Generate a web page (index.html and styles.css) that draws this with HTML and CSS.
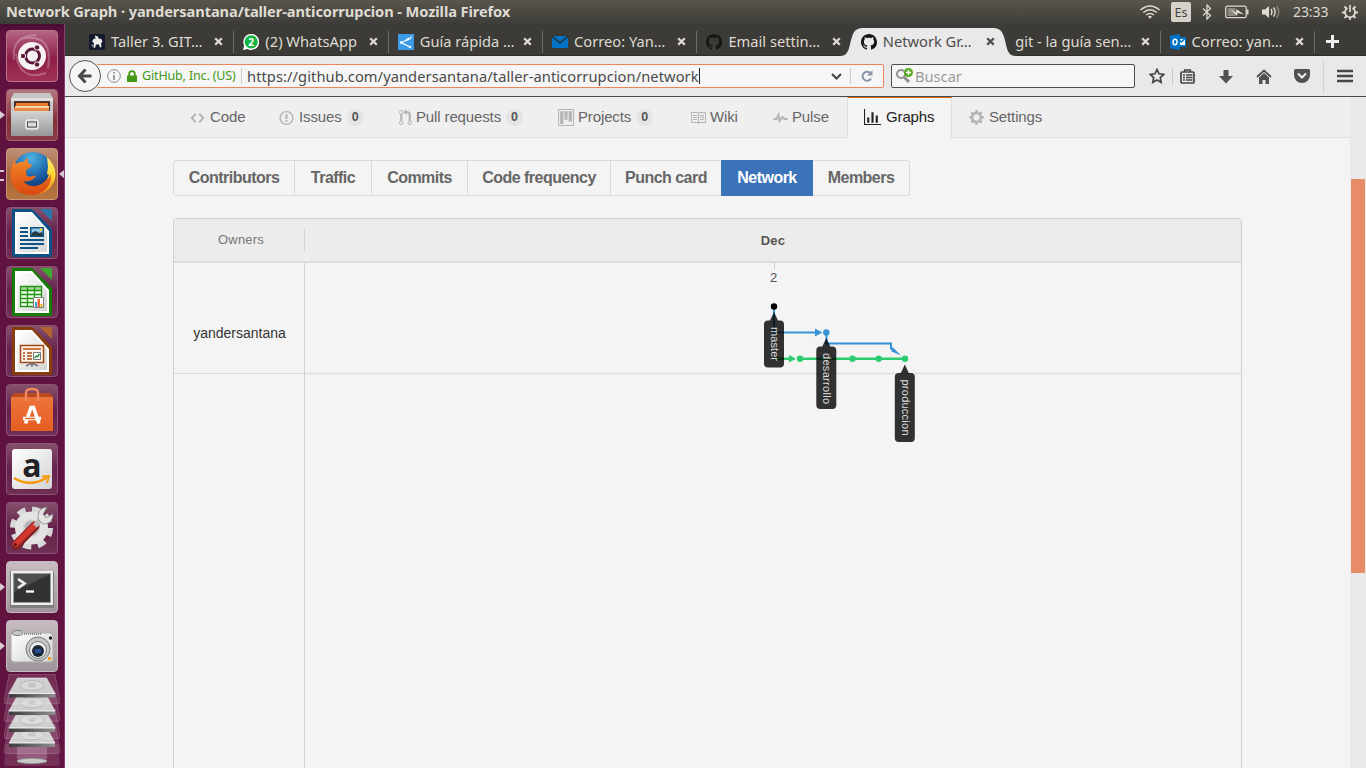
FILE: index.html
```html
<!DOCTYPE html>
<html lang="es">
<head>
<meta charset="utf-8">
<title>Network Graph</title>
<link rel="stylesheet" href="styles.css">
</head>
<body>
<svg class="defs" width="0" height="0">
  <defs>
    <linearGradient id="silver" x1="0" y1="0" x2="0" y2="1"><stop offset="0" stop-color="#d4d4d4"/><stop offset="1" stop-color="#979797"/></linearGradient>
    <linearGradient id="paper" x1="0" y1="0" x2="1" y2="1"><stop offset="0" stop-color="#fff"/><stop offset="1" stop-color="#d4d4d4"/></linearGradient>
    <linearGradient id="fox" x1="0" y1="0" x2="0" y2="1"><stop offset="0" stop-color="#f58a2a"/><stop offset="1" stop-color="#d9480f"/></linearGradient>
    <linearGradient id="tail" x1="0" y1="0" x2="0" y2="1"><stop offset="0" stop-color="#fff27a"/><stop offset=".5" stop-color="#ffd22e"/><stop offset="1" stop-color="#f07a1c"/></linearGradient>
    <radialGradient id="globe" cx=".45" cy=".15" r=".8"><stop offset="0" stop-color="#4fb4e4"/><stop offset=".6" stop-color="#1a62a8"/><stop offset="1" stop-color="#0f2d63"/></radialGradient>
    <linearGradient id="bag" x1="0" y1="0" x2="0" y2="1"><stop offset="0" stop-color="#ee7640"/><stop offset="1" stop-color="#e65e22"/></linearGradient>
    <linearGradient id="edge" x1="0" y1="0" x2="1" y2="0"><stop offset="0" stop-color="#3c3c3c"/><stop offset="1" stop-color="#8f8f8f"/></linearGradient>
    <symbol id="x" viewBox="0 0 9 9"><path d="M1.200 1.200l6.600 6.600M7.800 1.200L1.200 7.800" stroke="currentColor" stroke-width="2.300" fill="none"/></symbol>
    <symbol id="octocat" viewBox="0 0 16 16"><path d="M8 0C3.580 0 0 3.580 0 8c0 3.540 2.290 6.530 5.470 7.590.4.070.55-.17.55-.38 0-.19-.01-.82-.01-1.490-2.010.37-2.530-.49-2.690-.94-.09-.23-.48-.94-.82-1.130-.28-.15-.68-.52-.01-.53.63-.01 1.080.58 1.230.82.72 1.210 1.870.87 2.330.66.07-.52.28-.87.51-1.070-1.780-.2-3.640-.89-3.640-3.950 0-.87.31-1.590.82-2.150-.08-.2-.36-1.020.08-2.120 0 0 .67-.21 2.200.82.64-.18 1.320-.27 2-.27.68 0 1.360.09 2 .27 1.530-1.040 2.200-.82 2.200-.82.44 1.100.16 1.920.08 2.120.51.56.82 1.270.82 2.150 0 3.070-1.870 3.750-3.650 3.950.29.25.54.73.54 1.480 0 1.070-.01 1.930-.01 2.200 0 .21.15.46.55.38A8.013 8.013 0 0 0 16 8c0-4.420-3.580-8-8-8z"/></symbol>
    <symbol id="disk" viewBox="0 0 56 34">
      <path d="M5 0h46l5 28q0 2-2 2H2q-2 0-2-2z" fill="#fff" fill-opacity=".12" stroke="#fff" stroke-opacity=".22" stroke-width=".8"/>
      <path d="M13.500 4h29l8.500 15.500H5z" fill="#cfcfcf" stroke="#ececec" stroke-width=".6"/>
      <path d="M5 19.500h46v4H5z" fill="url(#edge)"/><path d="M5 19h46v1H5z" fill="#eee"/>
      <ellipse cx="28" cy="11.500" rx="12" ry="5" fill="#d8d8d8" stroke="#b0b0b0" stroke-width=".8"/><ellipse cx="28" cy="11" rx="3.500" ry="1.500" fill="#ccc" stroke="#a2a2a2" stroke-width=".6"/>
    </symbol>
  </defs>
</svg>

<div class="desktop">
  <header class="panel">
    <span class="panel-title">Network Graph · yandersantana/taller-anticorrupcion - Mozilla Firefox</span>
    <div class="indicators">
      <svg width="22" height="16" viewBox="0 0 22 16" fill="none" stroke="#dfdbd2" stroke-width="1.500"><path d="M1.500 6Q11-2 20.500 6M4.300 8.500q6.700-5.400 13.400 0M7 11q4-3.200 8 0"/><path d="M9 12.300q2-1.300 4 0L11 15z" fill="#dfdbd2" stroke="none"/></svg>
      <span class="keyboard">Es</span>
      <svg class="bt" width="10" height="16" viewBox="0 0 10 16" fill="none" stroke="#dfdbd2" stroke-width="1.300"><path d="M1 4.500l7.500 7L5 15V1l3.500 3.500L1 11.500"/></svg>
      <svg class="battery" width="24" height="14" viewBox="0 0 24 14"><rect x=".7" y="1.200" width="20.500" height="11.500" rx="1.500" fill="none" stroke="#dfdbd2" stroke-width="1.300"/><path d="M22 4.500h1.500v5H22z" fill="#dfdbd2"/><path d="M2.500 3h8v8h-8z" fill="#8c897f"/><path d="M5 4l6 3.500.5-3.500L19 9.500 12.500 8l-.5 3z" fill="#dfdbd2"/></svg>
      <svg class="volume" width="20" height="16" viewBox="0 0 20 16"><path d="M1 5.500h3L8 2v12l-4-3.500H1z" fill="#dfdbd2"/><path d="M10 5q2 3 0 6M12.500 3.500q3.500 4.500 0 9" fill="none" stroke="#dfdbd2" stroke-width="1.400"/><path d="M15.500 2q4.500 6 0 12" fill="none" stroke="#85837b" stroke-width="1.400"/></svg>
      <span class="clock">23:33</span>
      <svg width="16" height="16" viewBox="0 0 16 16" fill="none" stroke="#dfdbd2"><path d="M5.500 4A5 5 0 1 0 10.500 4" stroke-width="1.800"/><path d="M8 1v7" stroke-width="1.700"/><path d="M2.500 2.500l2 2M13.500 2.500l-2 2M0 8.500h3M13 8.500h3M2.500 14l2-2M13.500 14l-2-2M8 13v3" stroke-width="1.800"/></svg>
    </div>
  </header>

  <div class="workspace">
    <nav class="launcher">
      <div class="tile tile-dash"><svg viewBox="0 0 52 52"><g fill="none" stroke="#fff" opacity=".25"><path d="M8 30Q5 6 30 5" stroke-width="2"/><path d="M14 9Q48 2 42 38" stroke-width="2"/><path d="M10 24Q14 52 40 43" stroke-width="2"/></g><circle cx="26" cy="26" r="14" fill="#f7f3f4"/><circle cx="26.500" cy="26" r="7" fill="none" stroke="#5b1639" stroke-width="3"/><g fill="#5b1639" stroke="#f7f3f4"><circle cx="17" cy="26" r="2.700"/><circle cx="31" cy="17.500" r="2.700"/><circle cx="31" cy="34.500" r="2.700"/></g></svg></div>
      <div class="tile tile-files running"><svg viewBox="0 0 52 52"><path d="M8 4h36l3 5v38H5V9z" fill="#c7c7c7"/><path d="M5 9h42v4H5z" fill="#dedede"/><path d="M8 12h36v12H8z" fill="#4b3328"/><path d="M10 14h32v9H10z" fill="#e9792c"/><path d="M9 17h34v2H9z" fill="#f8d7af"/><path d="M8 19h35v4H8z" fill="#ea8a3f"/><path d="M5 22h42v25H5z" fill="url(#silver)"/><rect x="20" y="31" width="12" height="9" rx="2" fill="#bbb" stroke="#eee" stroke-width="1.500"/><rect x="21.500" y="33" width="9" height="5" fill="#ddd" stroke="#555"/></svg></div>
      <div class="tile tile-firefox running double focused"><svg viewBox="0 0 52 52"><circle cx="27" cy="24" r="20" fill="url(#globe)"/><path d="M41 9Q53 21 48 34 43 44 32 47q8-6 8-14l3-6-2-1 1-7z" fill="url(#tail)"/><path d="M9 10q-1 4 1 6 4-3 8-2 1-3 4-4-1 4 1 6 3 0 3 1 0 2-6 5 0 4 1 6 3 1 5 0 3-1 4 0-2 4-7 5-3 1-6 0 5 6 12 5 7-1 11-6 4-2 5-7 1 10-5 16-6 6-15 6Q11 47 6 36 2 24 9 10z" fill="url(#fox)"/></svg></div>
      <div class="tile"><svg viewBox="0 0 52 52"><path d="M6 2h20l20 20v26q0 2-2 2H8q-2 0-2-2z" fill="#0c5183"/><path d="M34 2h10q2 0 2 2v10z" fill="#2b76a8"/><path d="M9 5h17l17 19v23H9z" fill="#fff"/><path d="M11 7h15l15 18v20H11z" fill="url(#paper)"/><path d="M14 21h8M14 25h8M14 29h8M14 33h24M14 37h24M14 41h18" stroke="#0d5588" stroke-width="2"/><path d="M24 20h14v10H24z" fill="#0c5183"/><path d="M25.500 21.500h11V28h-11z" fill="#8fc7e8"/><path d="M25.500 29v-3l4-2 4 2 3-1v4z" fill="#243b48"/><circle cx="35" cy="22.500" r="1.500" fill="#edce36"/></svg></div>
      <div class="tile"><svg viewBox="0 0 52 52"><path d="M6 2h20l20 20v26q0 2-2 2H8q-2 0-2-2z" fill="#137d05"/><path d="M34 2h10q2 0 2 2v10z" fill="#3fa62e"/><path d="M9 5h17l17 19v23H9z" fill="#fff"/><path d="M11 7h15l15 18v20H11z" fill="url(#paper)"/><path d="M14.500 20.500h21v20h-21z" fill="#efffe9"/><path d="M14.500 20.500h21v4h-21z" fill="#a4d998"/><path d="M14.500 20.500h21v20h-21zM14.500 24.500h21M14.500 28.500h21M14.500 32.500h21M14.500 36.500h21M21.500 20.500v20M28.500 20.500v20" stroke="#249315" stroke-width="1.300" fill="none"/><path d="M27.500 31.500h10v10h-10z" fill="#fff" stroke="#7d7d7d"/><path d="M29 36h2v5h-2z" fill="#3e9fd8"/><path d="M31.500 33H34v8h-2.500z" fill="#e66b2c"/><path d="M34.500 38h2v3h-2z" fill="#efb70c"/></svg></div>
      <div class="tile"><svg viewBox="0 0 52 52"><path d="M6 2h20l20 20v26q0 2-2 2H8q-2 0-2-2z" fill="#8a3d0c"/><path d="M34 2h10q2 0 2 2v10z" fill="#b4652e"/><path d="M9 5h17l17 19v23H9z" fill="#fff"/><path d="M11 7h15l15 18v20H11z" fill="url(#paper)"/><path d="M14.500 20.500h23v17h-23z" fill="#fff4eb" stroke="#9e4815" stroke-width="1.500"/><path d="M17 24h18" stroke="#ce7342" stroke-width="2"/><path d="M17 28h2M17 31h2M17 34h2M21 28h5M21 31h5M21 34h5" stroke="#a34b18" stroke-width="1.700"/><path d="M27.500 27.500h7v7h-7z" fill="#fff" stroke="#777"/><path d="M28.500 33l2-2 1 1 2-3" stroke="#279348" stroke-width="1.400" fill="none"/><path d="M26 38v4M26 38l-6 3M26 38l6 3" stroke="#777" stroke-width="1.500"/></svg></div>
      <div class="tile"><svg viewBox="0 0 52 52"><path d="M8 9h36l3 5v33H5V14z" fill="url(#bag)"/><path d="M8 9h36l3 4H5z" fill="#b74820"/><path d="M20 17V9q0-4 6-4t6 4v8" stroke="#ed8861" stroke-width="2.500" fill="none"/><path d="M19.500 39.500l5.500-16h2.500l5.500 16M17 34.500h18" stroke="#fff" stroke-width="3.500" fill="none"/><path d="M19 34.500h10" stroke="#e8662b" stroke-width="1.500"/></svg></div>
      <div class="tile"><svg viewBox="0 0 52 52"><rect x="6" y="6" width="40" height="40" rx="3" fill="url(#paper)"/><text x="26" y="33.500" text-anchor="middle" class="amazon">a</text><path d="M8 35q16 10 33-.5" stroke="#f7990c" stroke-width="2.600" fill="none"/><path d="M36 33.500l7-.5-2 7" stroke="#f7990c" stroke-width="1.800" fill="none"/></svg></div>
      <div class="tile"><svg viewBox="0 0 52 52"><circle cx="25.500" cy="26" r="18.500" fill="none" stroke="#d8d8d8" stroke-width="6" stroke-dasharray="8 6.530"/><circle cx="25.500" cy="26" r="12.500" fill="#ccc" stroke="#e4e4e4" stroke-width="8"/><circle cx="25.500" cy="26" r="7" fill="#b4b4b4"/><path d="M10 43l19-19" stroke="#84201f" stroke-width="9" stroke-linecap="round"/><path d="M10 42l19-19" stroke="#d2362f" stroke-width="6" stroke-linecap="round"/><path d="M29 24l7-8" stroke="#bdbdbd" stroke-width="5"/><path d="M32 17q-1-11 9-12l-4 7 3 4 7-4q0 10-10 10z" fill="#e4e4e4" stroke="#8c8c8c" stroke-width=".8"/><circle cx="9.500" cy="42.500" r="1.500" fill="#591412"/></svg></div>
      <div class="tile tile-gray running"><svg viewBox="0 0 52 52"><path d="M4 10h44v37H4z" fill="#7d7d7d"/><path d="M5 10h42v34H5z" fill="#efefef"/><path d="M7 12h38v30H7z" fill="#999"/><path d="M8 13h36v28H8z" fill="#30332f"/><path d="M8 13h36L8 31z" fill="#4d504c"/><path d="M12 18l6.500 4.500L12 27" fill="none" stroke="#f0f0f0" stroke-width="2.700"/><path d="M20 30.500h8" stroke="#fff" stroke-width="2.300"/></svg></div>
      <div class="tile tile-gray running"><svg viewBox="0 0 52 52"><path d="M5 14q1-4 7-4 6 0 7 3h25q3 1 3 4v23q0 2-3 2H8q-3 0-3-3z" fill="url(#paper)" stroke="#aaa"/><ellipse cx="11.500" cy="13" rx="5.500" ry="2.500" fill="#c5c8ca" stroke="#777"/><path d="M18 14h17" stroke="#888" stroke-width="2" stroke-dasharray="1 1"/><circle cx="32" cy="29" r="12" fill="#c7c7c7" stroke="#777"/><circle cx="32" cy="30" r="8.500" fill="#ededed" stroke="#777"/><circle cx="32" cy="31" r="6" fill="#1c2736"/><path d="M29 29h6v4h-6z" fill="#244f98"/><circle cx="44.500" cy="18" r="1.700" fill="#222"/><path d="M42 37h3v3h-3z" fill="#f79e1b"/></svg></div>
      <svg class="stack" width="56" height="96" viewBox="0 0 56 96"><path d="M2 72h52l2 20q0 2-2 2H2q-2 0-2-2z" fill="#fff" opacity=".12"/><path d="M13 73h30v14H13z" fill="#f3d9e6" opacity=".25"/><ellipse cx="28" cy="89" rx="15" ry="2.500" fill="#c9c9c9" stroke="#989898"/><use href="#disk" y="51.500" width="56" height="34"/><use href="#disk" y="36.500" width="56" height="34"/><use href="#disk" y="19.500" width="56" height="34"/><use href="#disk" y="2" width="56" height="34"/></svg>
    </nav>

    <main class="browser">
      <div class="tabs">
        <div class="tab"><svg class="favicon" viewBox="0 0 16 16"><rect width="16" height="16" rx="1.500" fill="#131b2e"/><path d="M6 1.500l3 1 .5 2 3 .5 1 3-1.500 1 .5 4-1.500.5-1-3H7l-1 3.500-1.500-.5L5 9 3 7.500l2-3 1.500.5z" fill="#eee"/><path d="M2.500 10.500l2 .5-1 2z" fill="#b7bec9"/></svg><span class="label">Taller 3. GIT…</span><svg class="close"><use href="#x"/></svg></div>
        <div class="tab"><svg class="favicon" viewBox="0 0 16 16"><path d="M0 16l1.200-4.300A8 8 0 1 1 4.500 15z" fill="#fff"/><circle cx="8.200" cy="7.800" r="6.600" fill="#12b640"/><text x="8.200" y="11.500" text-anchor="middle" class="badge-count">2</text></svg><span class="label">(2) WhatsApp</span><svg class="close"><use href="#x"/></svg></div>
        <div class="tab"><svg class="favicon" viewBox="0 0 16 16"><path d="M0 0h16v16H0z" fill="#3c9be8"/><path d="M12 5L3 8.500l9 4.500M8 6l3-2M12 5l1.500-2.500" stroke="#fff" stroke-width="1.200" fill="none"/><circle cx="3" cy="8.500" r="1.200" fill="#fff"/><circle cx="12" cy="13" r="1.200" fill="#fff"/></svg><span class="label">Guía rápida …</span><svg class="close"><use href="#x"/></svg></div>
        <div class="tab"><svg class="favicon" viewBox="0 0 16 16"><path d="M0 2h16v12H0z" fill="#0072c6"/><path d="M0 2.300l8 6.500 8-6.500" fill="none" stroke="#262d31" stroke-width="1.300"/></svg><span class="label">Correo: Yan…</span><svg class="close"><use href="#x"/></svg></div>
        <div class="tab last"><svg class="favicon" fill="#171717" viewBox="0 0 16 16"><use href="#octocat"/></svg><span class="label">Email settin…</span><svg class="close"><use href="#x"/></svg></div>
        <div class="tab active"><svg class="tab-shape" width="176" height="28" viewBox="0 0 176 28"><path d="M0 28C10 28 9 17 12 9 14 2 17 0 24 0h128c7 0 10 2 12 9 3 8 2 19 12 19z" fill="#e9e9e9"/></svg><svg class="favicon" fill="#171717" viewBox="0 0 16 16"><use href="#octocat"/></svg><span class="label">Network Gr…</span><svg class="close"><use href="#x"/></svg></div>
        <div class="tab"><span class="label">git - la guía sen…</span><svg class="close"><use href="#x"/></svg></div>
        <div class="tab"><svg class="favicon" viewBox="0 0 16 16"><path d="M8 3h8v10H8z" fill="#0072c6"/><path d="M9 5h6v6H9z" fill="#fff"/><path d="M9.500 6l2 2L15 4.500" stroke="#0072c6" fill="none" stroke-width="1.500"/><path d="M0 1.500L10 0v16L0 14.500z" fill="#0072c6"/><ellipse cx="5" cy="8" rx="2" ry="2.700" fill="none" stroke="#fff" stroke-width="1.500"/></svg><span class="label">Correo: yan…</span><svg class="close"><use href="#x"/></svg></div>
        <svg class="newtab" width="13" height="13" viewBox="0 0 13 13"><path d="M6.500 0v13M0 6.500h13" stroke="#f0f0f0" stroke-width="3"/></svg>
      </div>

      <div class="toolbar">
        <div class="back"><svg width="16" height="16" viewBox="0 0 16 16"><path d="M8.500 1.500L2.500 8l6 6.500M3 8h11.500" fill="none" stroke="#4a4a4a" stroke-width="3"/></svg></div>
        <div class="urlbar">
          <svg width="14" height="14" viewBox="0 0 14 14"><circle cx="7" cy="7" r="6.300" fill="none" stroke="#8b8b8b"/><path d="M6.200 6h1.600v5H6.200zM6.200 3h1.600v1.700H6.200z" fill="#8b8b8b"/></svg>
          <svg class="lock" width="10" height="13" viewBox="0 0 10 13"><path d="M0 5.500h10V12H0z" fill="#449816"/><path d="M2.200 6V4q0-2.800 2.800-2.800T7.800 4v2" fill="none" stroke="#449816" stroke-width="1.800"/></svg>
          <span class="identity">GitHub, Inc. (US)</span>
          <span class="url">https://github.com/yandersantana/taller-anticorrupcion/network</span>
          <svg class="chevron" width="11" height="7" viewBox="0 0 11 7"><path d="M1 1l4.500 4.500L10 1" fill="none" stroke="#444" stroke-width="2"/></svg>
          <span class="reload"><svg width="12" height="12" viewBox="0 0 12 12"><path d="M10 8.500A4.500 4.500 0 1 1 9 2.800" fill="none" stroke="#8b97a5" stroke-width="2"/><path d="M11.500 0v5.500H6z" fill="#8b97a5"/></svg></span>
        </div>
        <div class="search">
          <svg width="18" height="17" viewBox="0 0 18 17"><circle cx="5" cy="6" r="4" fill="none" stroke="#929292" stroke-width="2"/><path d="M8 9l5 5" stroke="#929292" stroke-width="3"/><circle cx="12.500" cy="4.500" r="4.500" fill="#56ad20"/><path d="M12.500 2v5M10 4.500h5" stroke="#fff" stroke-width="1.400"/></svg>
          <span>Buscar</span>
        </div>
        <div class="actions">
          <svg width="16" height="16" viewBox="0 0 16 16"><path d="M8 1.500l2 4.300 4.800.6-3.500 3.200.9 4.700L8 12l-4.200 2.300.9-4.700L1.200 6.400 6 5.800z" fill="none" stroke="#454545" stroke-width="1.700"/></svg>
          <i class="divider"></i>
          <svg class="clipboard" width="15" height="15" viewBox="0 0 15 15"><rect x="1" y="3" width="13" height="11" rx="1" fill="none" stroke="#454545" stroke-width="1.700"/><path d="M4.500 3V1h6v2M3 6h2M6 6h6.500M3 8.500h2M6 8.500h6.500M3 11h2M6 11h6.500" stroke="#454545" stroke-width="1.300" fill="none"/></svg>
          <svg class="download" width="14" height="15" viewBox="0 0 14 15"><path d="M4.500 1h5v6H14l-7 7.500L0 7h4.500z" fill="#515151"/></svg>
          <svg class="home" width="16" height="15" viewBox="0 0 16 15"><path d="M1 8l7-6.500L15 8" fill="none" stroke="#515151" stroke-width="1.900"/><path d="M3 8.500l5-4.600 5 4.600V15H9.500v-4h-3v4H3z" fill="#515151"/></svg>
          <svg class="pocket" width="16" height="14" viewBox="0 0 16 14"><path d="M1.500 0h13Q16 0 16 1.500V6a8 8 0 0 1-16 0V1.500Q0 0 1.500 0z" fill="#515151"/><path d="M4 4.500L8 8.500l4-4" fill="none" stroke="#eee" stroke-width="2"/></svg>
          <i class="divider tall"></i>
          <svg class="menu" width="16" height="14" viewBox="0 0 16 14"><path d="M0 2h16M0 7h16M0 12h16" stroke="#464646" stroke-width="2.300"/></svg>
        </div>
      </div>

      <div class="viewport">
        <div class="page">
          <nav class="reponav">
            <a class="code"><svg width="15" height="16" viewBox="0 0 14 16"><path d="M9.500 3L8 4.500 11.500 8 8 11.500 9.500 13 14 8 9.500 3zm-5 0L0 8l4.500 5L6 11.500 2.500 8 6 4.500 4.500 3z"/></svg>Code</a>
            <a class="issues"><svg width="15" height="16" viewBox="0 0 14 16"><path d="M7 2.300c3.140 0 5.700 2.560 5.700 5.700s-2.560 5.700-5.700 5.700A5.710 5.710 0 0 1 1.300 8c0-3.140 2.560-5.700 5.700-5.700zM7 1C3.140 1 0 4.140 0 8s3.140 7 7 7 7-3.140 7-7-3.140-7-7-7zm1 3H6v5h2V4zm0 6H6v2h2v-2z"/></svg>Issues<b>0</b></a>
            <a class="pulls"><svg width="13" height="17" viewBox="0 0 12 16"><path d="M11 11.280V5c-.03-.78-.34-1.470-.94-2.060C9.460 2.350 8.780 2.030 8 2H7V0L4 3l3 3V4h1c.27.02.48.11.69.31.21.2.3.42.31.69v6.280A1.993 1.993 0 0 0 10 15a1.993 1.993 0 0 0 1-3.720zm-1 2.920c-.66 0-1.200-.55-1.200-1.200 0-.65.55-1.200 1.200-1.200.65 0 1.200.55 1.200 1.200 0 .65-.55 1.200-1.200 1.200zM4 3c0-1.110-.89-2-2-2a1.993 1.993 0 0 0-1 3.720v6.560A1.993 1.993 0 0 0 2 15a1.993 1.993 0 0 0 1-3.720V4.720c.59-.34 1-.98 1-1.720zm-.8 10c0 .66-.55 1.200-1.200 1.200-.65 0-1.200-.55-1.200-1.200 0-.65.55-1.200 1.200-1.200.65 0 1.200.55 1.200 1.200zM2 4.200C1.340 4.200.8 3.650.8 3c0-.65.55-1.200 1.200-1.200.65 0 1.200.55 1.200 1.200 0 .65-.55 1.200-1.200 1.200z"/></svg>Pull requests<b>0</b></a>
            <a class="projects"><svg width="16" height="17" viewBox="0 0 15 16"><path fill-rule="evenodd" d="M10 12h3V2h-3v10zm-4-2h3V2H6v8zm-4 4h3V2H2v12zm-1 1h13V1H1v14zM14 0H1a1 1 0 0 0-1 1v14a1 1 0 0 0 1 1h13a1 1 0 0 0 1-1V1a1 1 0 0 0-1-1z"/></svg>Projects<b>0</b></a>
            <a class="wiki"><svg width="17" height="16" viewBox="0 0 17 16"><path d="M3 5h4v1H3V5zm0 3h4V7H3v1zm0 2h4V9H3v1zm11-5h-4v1h4V5zm0 2h-4v1h4V7zm0 2h-4v1h4V9zm2-6v9c0 .55-.45 1-1 1H9.500l-1 1-1-1H2c-.55 0-1-.45-1-1V3c0-.55.45-1 1-1h5.500l1 1 1-1H15c.55 0 1 .45 1 1zm-8 .5L7.500 3H2v9h6V3.500zm7-.5H9.500l-.5.5V12h6V3z"/></svg>Wiki</a>
            <a class="pulse"><svg width="15" height="16" viewBox="0 0 14 16"><path d="M11.500 8L8.800 5.400 6.600 8.500 5.500 1.600 2.380 8H0v2h3.600l.9-1.800.9 5.400L9 8.500l1.600 1.500H14V8z"/></svg>Pulse</a>
            <a class="graphs selected"><svg width="17" height="17" viewBox="0 0 16 16"><path d="M16 14v1H0V0h1v14h15zM5 13H3V8h2v5zm4 0H7V3h2v10zm4 0h-2V6h2v7z"/></svg>Graphs</a>
            <a class="settings"><svg width="15" height="17" viewBox="0 0 14 16"><path fill-rule="evenodd" d="M14 8.770v-1.600l-1.940-.64-.45-1.090.88-1.840-1.130-1.130-1.810.91-1.090-.45-.69-1.920h-1.600l-.63 1.940-1.110.45-1.840-.88-1.130 1.130.91 1.810-.45 1.090L0 7.230v1.590l1.940.64.45 1.090-.88 1.840 1.130 1.130 1.810-.91 1.090.45.69 1.920h1.590l.63-1.940 1.110-.45 1.840.88 1.130-1.130-.92-1.810.47-1.090L14 8.750v.02zM7 11c-1.660 0-3-1.340-3-3s1.340-3 3-3 3 1.340 3 3-1.340 3-3 3z"/></svg>Settings</a>
          </nav>
          <div class="content">
            <div class="subnav"><a>Contributors</a><a>Traffic</a><a>Commits</a><a>Code frequency</a><a>Punch card</a><a class="current">Network</a><a>Members</a></div>
            <section class="network">
              <div class="network-head"><span class="owners">Owners</span><span class="month">Dec</span></div>
              <div class="network-body">
                <div class="owner">yandersantana</div>
                <svg class="graph" width="936" height="506" viewBox="305 263 936 506">
                  <path d="M305 373.500h937" stroke="#dcdcdc" stroke-width="1.500"/>
                  <path d="M774.500 263v6" stroke="#ccc"/>
                  <text x="773.500" y="282" text-anchor="middle" class="day">2</text>
                  <g fill="none" stroke="#3593d6" stroke-width="2"><path d="M774 306v26.500h43M826.500 332v11.500H891v5l4 3"/></g>
                  <path d="M815 328.500l7.500 4-7.500 4zM892.500 347l8.500 8.500-9.500-4z" fill="#3593d6"/><circle cx="826.300" cy="332.500" r="3.200" fill="#3593d6"/>
                  <path d="M774 358.800h17M800 358.800h105" stroke="#2ecc71" stroke-width="2.400"/><path d="M789 355l7 3.800-7 3.800z" fill="#2ecc71"/>
                  <g fill="#2ecc71"><circle cx="800" cy="358.800" r="3.200"/><circle cx="852.500" cy="358.800" r="3.200"/><circle cx="878.700" cy="358.800" r="3.200"/><circle cx="905" cy="358.800" r="3.200"/></g>
                  <circle cx="774" cy="306.500" r="3.200"/>
                  <g class="flag" transform="translate(774 312)"><path d="M0 0l4 8.500h2q4 0 4 4v39q0 4-4 4H-6q-4 0-4-4v-39q0-4 4-4h2z"/><text transform="rotate(90)" x="15" y="3" textLength="34">master</text></g>
                  <g class="flag" transform="translate(826.300 338)"><path d="M0 0l4 8.500h2q4 0 4 4V67q0 4-4 4H-6q-4 0-4-4V12.500q0-4 4-4h2z"/><text transform="rotate(90)" x="15" y="3" textLength="51">desarrollo</text></g>
                  <g class="flag" transform="translate(904.800 364.500)"><path d="M0 0l4 8.500h2q4 0 4 4v61q0 4-4 4H-6q-4 0-4-4v-61q0-4 4-4h2z"/><text transform="rotate(90)" x="15" y="3" textLength="56">produccion</text></g>
                </svg>
              </div>
            </section>
          </div>
        </div>
        <div class="scrollbar"><div class="thumb"></div></div>
      </div>
    </main>
  </div>
</div>
</body>
</html>
```
FILE: styles.css
```css
* { box-sizing: border-box; }
body { margin: 0; overflow: hidden; font-family: "Noto Sans", "Open Sans", sans-serif; }
.defs { display: block; }
svg { display: block; flex: none; }
.desktop { width: 1366px; height: 768px; display: flex; flex-direction: column; overflow: hidden; }

/* Top panel */
.panel { height: 24px; flex: none; display: flex; justify-content: space-between; align-items: center; padding: 0 8px 0 6px; background: linear-gradient(#5a564d, #3d3c38); color: #dfdbd2; }
.panel-title { margin-top: -2px; font-weight: 700; font-size: 14.670px; letter-spacing: -.105px; white-space: nowrap; }
.indicators { display: flex; align-items: center; }
.keyboard { width: 20px; height: 20px; margin-left: 10px; border-radius: 2px; background: #d6d2c9; color: #45433e; font-size: 12.500px; line-height: 21px; text-align: center; }
.bt { margin-left: 11px; }
.battery { margin-left: 13px; }
.volume { margin-left: 12px; }
.clock { width: 36px; margin: -2px 13px 0 12px; font-size: 14px; letter-spacing: -.1px; }

.workspace { display: flex; height: 744px; }

/* Launcher */
.launcher { width: 65px; flex: none; padding: 6px 0 0 6px; display: flex; flex-direction: column; gap: 7px; background: linear-gradient(#4a0c31, #5f1240 10px, #621440); border-right: 1px solid #8b3e76; }
.tile { position: relative; width: 52px; height: 52px; flex: none; border-radius: 4px; border: 1px solid #8d5575; background: linear-gradient(#85506c, #65214a 50%, #6f3054); }
.tile svg { width: 52px; height: 52px; margin: -1px; }
.tile-dash { background: linear-gradient(#b56584, #8d1f48 55%, #a23055); border-color: #b8748c; }
.tile-files { background: linear-gradient(#b27a80, #853039 60%, #883c45); border-color: #a8646e; }
.tile-firefox { background: linear-gradient(#bd9077, #a8643b 55%, #b5763f); border-color: #c6977d; }
.tile-gray { background: linear-gradient(#c6bcc2, #a0949b); border-color: #c6b9c1; }
.running::before { content: ""; position: absolute; left: -7px; top: 21px; border: 4px solid transparent; border-left: 5px solid #d9cbd3; border-right: 0; }
.double::before { border: 0; width: 4px; height: 7px; border-top: 2px solid #d9cbd3; border-bottom: 2px solid #d9cbd3; }
.focused::after { content: ""; position: absolute; right: -7px; top: 21px; border: 4px solid transparent; border-right: 5px solid #d9cbd3; border-left: 0; }
.stack { margin: -7px 0 0 -2px; }

/* Tabs */
.browser { flex: 1; min-width: 0; display: flex; flex-direction: column; }
.tabs { height: 32px; flex: none; display: flex; align-items: center; padding: 4px 0 0 15px; background: #3c3b37; border-bottom: 1px solid #2e2d2a; }
.tab { position: relative; width: 154.360px; height: 22px; flex: none; display: flex; align-items: center; padding: 0 10px 0 9px; color: #dfdbd2; border-right: 1px solid #6d6b66; }
.tab.last, .tab.active { border-right-color: transparent; }
.tab.active { color: #4c4c4c; }
.tab-shape { position: absolute; left: -12px; top: -3px; }
.favicon { position: relative; width: 16px; height: 16px; margin-right: 6px; }
.label { position: relative; flex: 1; margin-top: -2px; font-size: 14.670px; line-height: 20px; white-space: nowrap; }
.close { position: relative; width: 9px; height: 9px; }
.newtab { margin-left: 11px; }
.badge-count { font: bold 10px "Noto Sans", sans-serif; fill: #fff; }

/* Toolbar */
.toolbar { height: 41px; flex: none; display: flex; align-items: center; padding-left: 4px; background: #e9e9e9; border-bottom: 1px solid #4a4a4a; }
.back { position: relative; width: 32px; height: 32px; flex: none; display: grid; place-items: center; background: #f5f5f4; border: 1px solid #555; border-radius: 50%; }
.urlbar { width: 787px; height: 24px; margin-left: -4px; flex: none; display: flex; align-items: center; padding-left: 10px; background: #f6f6f6; border: 1px solid #e8855c; border-left: 0; border-radius: 0 2px 2px 0; }
.lock { margin-left: 6px; }
.identity { width: 99px; margin-left: 5px; font-size: 12.500px; letter-spacing: -.15px; line-height: 16px; color: #449816; white-space: nowrap; }
.url { height: 16px; padding-left: 5px; border-left: 1px solid #ccc; border-right: 1px solid #222; font-size: 14.670px; letter-spacing: .075px; line-height: 16px; color: #4a4a4a; white-space: nowrap; }
.chevron { margin-left: auto; }
.reload { width: 33px; height: 16px; margin-left: 8px; padding: 2px 0 0 10px; border-left: 1px solid #ccc; }
.search { width: 244px; height: 24px; margin-left: 7px; flex: none; display: flex; align-items: center; gap: 1px; padding: 0 0 0 4px; background: #f6f6f6; border: 1px solid #4f4f4f; border-radius: 2px; font-size: 14.670px; line-height: 20px; color: #999; }
.actions { flex: 1; height: 100%; display: flex; align-items: center; padding-left: 14px; }
.divider { width: 1px; height: 17px; margin-left: 7px; background: #c8c8c8; }
.clipboard { margin-left: 7px; }
.download { margin-left: 24px; }
.home { margin-left: 23px; }
.pocket { margin-left: 22px; }
.divider.tall { height: 33px; margin-left: 13px; background: #d2d2d2; }
.menu { margin-left: 13px; }

/* Page */
.viewport { flex: 1; min-height: 0; display: flex; }
.page { flex: 1; background: #f4f4f4; font-family: "Liberation Sans", Arial, sans-serif; overflow: hidden; }
.reponav { height: 41px; display: flex; padding-left: 125px; background: #efefef; border-bottom: 1px solid #e2e2e2; color: #666; fill: #b4b4b4; font-size: 15px; letter-spacing: -.13px; }
.reponav a { height: 39px; flex: none; display: flex; align-items: center; gap: 5px; white-space: nowrap; }
.reponav svg { margin-top: 2px; }
.reponav b { height: 17px; min-width: 17px; margin-top: 1px; padding: 0 5px; border-radius: 10px; background: #e4e4e4; color: #555; font-size: 12.500px; line-height: 17px; text-align: center; }
.code { width: 89px; }
.issues { width: 120px; }
.pulls { width: 159px; }
.pulls svg, .projects svg { margin-right: -1px; }
.projects { width: 132px; }
.wiki { width: 83px; }
.wiki svg { margin-right: -2px; }
.pulse { width: 74px; }
.pulse svg { margin-right: -1px; }
.reponav .selected { width: 105px; height: 41px; padding: 0 0 3px 16px; background: #f4f4f4; border: solid #dedede; border-width: 1px 1px 0; border-top-color: #d26911; color: #222; fill: #222; }
.settings { padding-left: 17px; }
.content { padding: 22px 0 0 108px; }
.subnav { display: flex; height: 36px; width: 737px; border: 1px solid #dadada; border-radius: 3px; font-weight: 700; font-size: 16px; letter-spacing: -.53px; line-height: 34px; color: #666; text-align: center; }
.subnav a { flex: none; border-right: 1px solid #dadada; }
.subnav a:nth-child(1) { width: 121px; }
.subnav a:nth-child(2) { width: 77px; }
.subnav a:nth-child(3) { width: 96px; }
.subnav a:nth-child(4) { width: 143px; }
.subnav a:nth-child(5) { width: 110px; border-right: 0; }
.subnav a:nth-child(6) { width: 92px; }
.subnav a:nth-child(7) { width: 96px; border: 0; }
.subnav .current { margin: -1px 0; line-height: 36px; background: #3b73b9; border: 0; color: #fff; }
.network { width: 1069px; height: 560px; margin-top: 22px; border: 1px solid #cfcfcf; border-radius: 3px 3px 0 0; }
.network-head { height: 44px; display: flex; align-items: center; background: #ececec; border-bottom: 2px solid #dcdcdc; letter-spacing: .3px; }
.owners { width: 131px; height: 22px; padding-left: 4px; border-right: 1px solid #d5d5d5; font-size: 13px; line-height: 22px; color: #777; text-align: center; letter-spacing: .2px; }
.month { flex: 1; font-size: 13px; font-weight: 700; color: #555; text-align: center; }
.network-body { display: flex; }
.owner { width: 131px; flex: none; height: 515px; padding: 61px 0 0 1px; border-right: 1px solid #d2d2d2; background: linear-gradient(#dcdcdc, #dcdcdc) 0 110px / 100% 1px no-repeat; font-size: 14px; line-height: 18px; color: #333; text-align: center; }
.day { font-size: 13px; fill: #555; }
.flag path { fill: #000; fill-opacity: .8; }
.flag text { font-size: 11px; fill: #ddd; }
.amazon { font: bold 32px "Open Sans", sans-serif; fill: #222; }
.scrollbar { width: 16px; flex: none; background: #e9e9e7; padding: 82px 1px 0; }
.thumb { height: 394px; background: #e88b67; border-radius: 1px; }
```
